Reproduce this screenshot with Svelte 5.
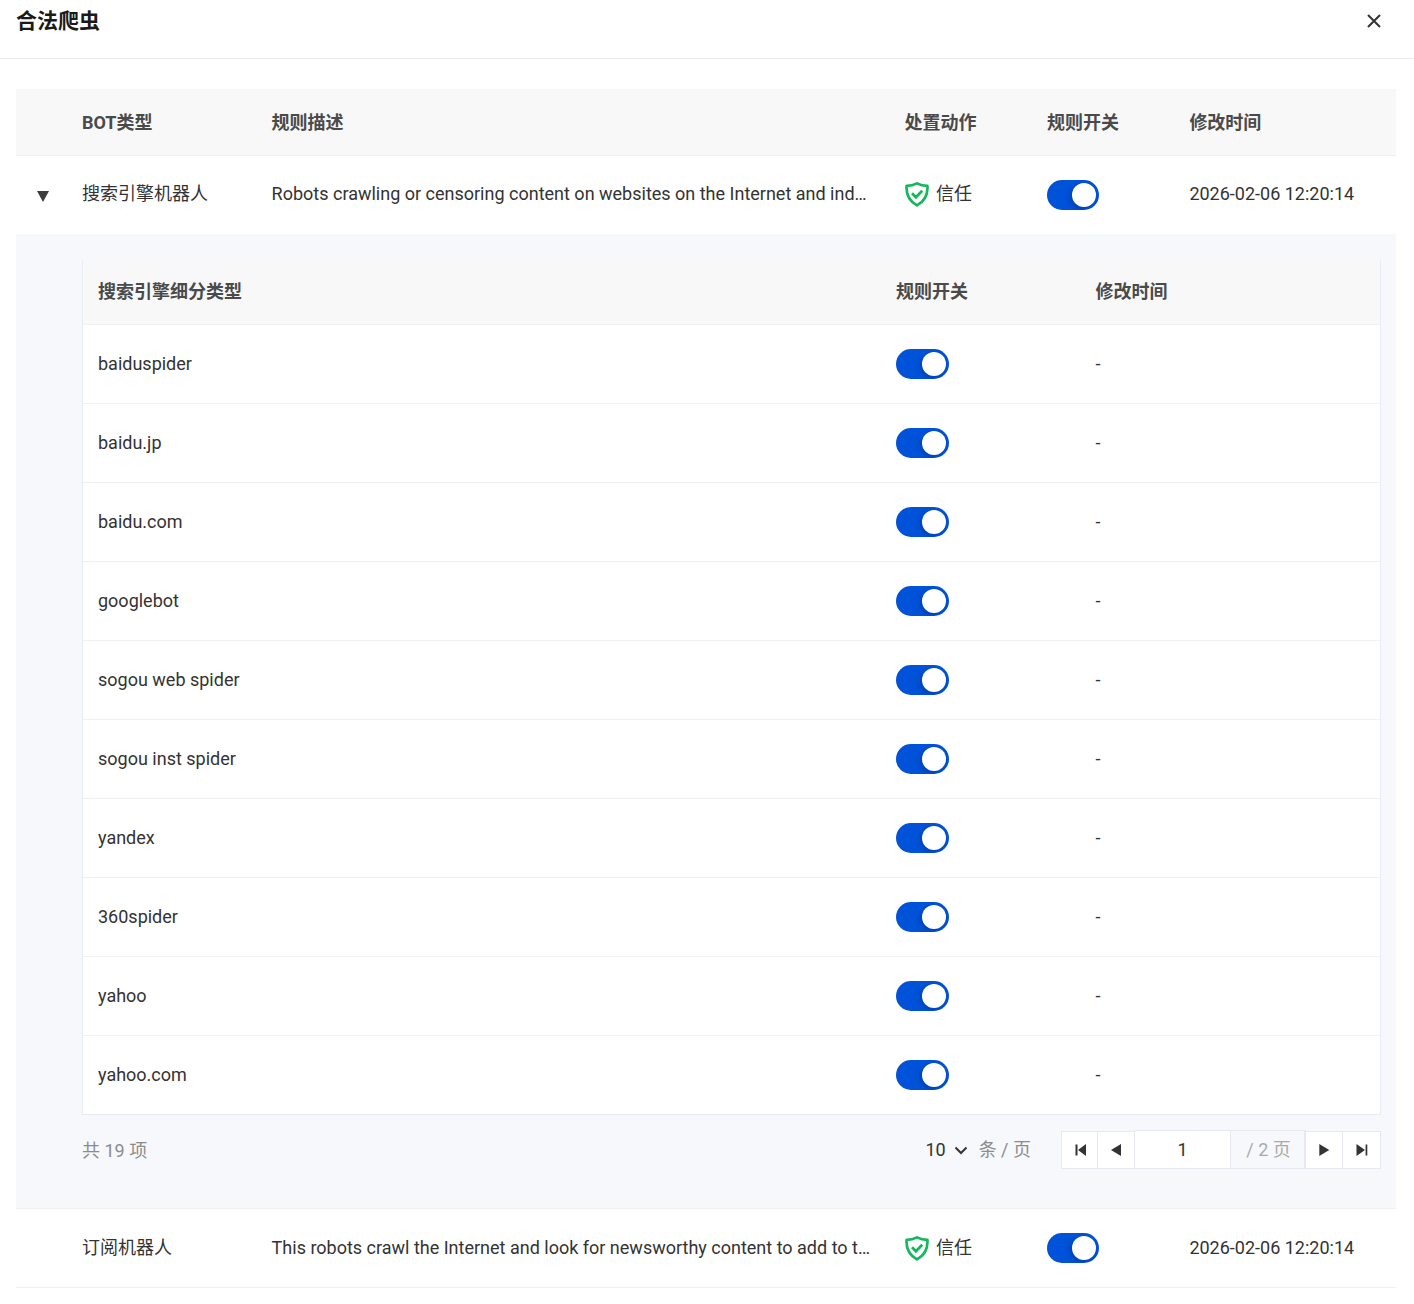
<script>
  const subTypes = [
    'baiduspider', 'baidu.jp', 'baidu.com', 'googlebot', 'sogou web spider',
    'sogou inst spider', 'yandex', '360spider', 'yahoo', 'yahoo.com'
  ];
</script>

{#snippet toggle()}
  <span class="switch"><span class="knob"></span></span>
{/snippet}

{#snippet trust()}
  <span class="action">
    <svg width="24" height="26" viewBox="0 0 24 26" fill="none" stroke="#12b85c">
      <path d="M12 2.400C15 4 18.400 4.900 22.400 4.900 23 12.800 19.800 20 12 24.400 4.200 20 1 12.800 1.600 4.900 5.600 4.900 9 4 12 2.400Z" stroke-width="2.700" stroke-linejoin="round" />
      <path d="M7 12.300 10.900 16.300 17.200 9.800" stroke-width="2.700" />
    </svg>
    信任
  </span>
{/snippet}

<div class="dialog">
  <header class="title">
    <h2>合法爬虫</h2>
    <svg class="close" width="16" height="16" viewBox="0 0 16 16" stroke="#333" stroke-width="2" fill="none">
      <path d="M2 2 14 14M14 2 2 14" />
    </svg>
  </header>

  <div class="body">
    <div class="row head">
      <span></span>
      <span>BOT类型</span>
      <span>规则描述</span>
      <span>处置动作</span>
      <span>规则开关</span>
      <span>修改时间</span>
    </div>

    <div class="row item open">
      <span class="caret"></span>
      <span>搜索引擎机器人</span>
      <span class="desc">Robots crawling or censoring content on websites on the Internet and indexing them for search engines</span>
      {@render trust()}
      {@render toggle()}
      <span>2026-02-06 12:20:14</span>
    </div>

    <div class="expanded">
      <div class="sub">
        <div class="subrow subhead">
          <span>搜索引擎细分类型</span>
          <span>规则开关</span>
          <span>修改时间</span>
        </div>
        {#each subTypes as name}
          <div class="subrow">
            <span>{name}</span>
            {@render toggle()}
            <span>-</span>
          </div>
        {/each}
      </div>

      <div class="pager">
        <span class="total">共 19 项</span>
        <span class="size">
          10
          <svg width="16" height="16" viewBox="0 0 16 16" fill="none" stroke="#333" stroke-width="2"><path d="M2.500 5.500 8 11 13.500 5.500" /></svg>
        </span>
        <span class="per">条 / 页</span>
        <div class="pages">
          <span class="btn first">
            <svg width="16" height="16" viewBox="0 0 16 16" fill="#333"><path d="M3.500 2.500h2v11h-2zM14 2v12L6 8z" /></svg>
          </span>
          <span class="btn prev">
            <svg width="16" height="16" viewBox="0 0 16 16" fill="#333"><path d="M13 2v12L3 8z" /></svg>
          </span>
          <span class="current">1</span>
          <span class="count">/ 2 页</span>
          <span class="btn next">
            <svg width="16" height="16" viewBox="0 0 16 16" fill="#333"><path d="M3.300 2v12l10-6z" /></svg>
          </span>
          <span class="btn last">
            <svg width="16" height="16" viewBox="0 0 16 16" fill="#333"><path d="M11.600 2.500h1.700v11h-1.700zM2.500 2v12l8.500-6z" /></svg>
          </span>
        </div>
      </div>
    </div>

    <div class="row item">
      <span></span>
      <span>订阅机器人</span>
      <span class="desc">This robots crawl the Internet and look for newsworthy content to add to their news feeds and aggregators</span>
      {@render trust()}
      {@render toggle()}
      <span>2026-02-06 12:20:14</span>
    </div>
  </div>
</div>

<style>
  :global(body) {
    margin: 0;
    background: #fff;
  }
  .dialog {
    font-family: Roboto, "Noto Sans CJK SC", sans-serif;
    font-size: 18px;
    line-height: 24px;
    color: #333;
    height: 1304px;
    overflow: hidden;
  }
  .title {
    display: flex;
    align-items: center;
    justify-content: space-between;
    height: 42px;
    padding: 0 32px 16px 16px;
    border-bottom: 1px solid #ebebeb;
  }
  h2 {
    margin: 0;
    font-size: 21px;
    font-weight: 700;
    line-height: 28px;
    color: #1a1a1a;
  }
  .body {
    padding: 30px 18px 0 16px;
  }
  .row {
    display: grid;
    grid-template-columns: 50px 189.600px 632.800px 142.600px 142.400px 1fr;
    align-items: center;
    border-bottom: 1px solid #f0f0f0;
    box-sizing: border-box;
  }
  .row > span {
    padding-left: 16px;
    min-width: 0;
  }
  .row > .switch {
    padding-left: 3px;
    margin-left: 16px;
  }
  .head {
    height: 67px;
    background: #f8f8f9;
    font-weight: 700;
    color: #4a4a4a;
  }
  .head > span {
    padding-top: 2px;
  }
  .item {
    height: 79px;
    background: #fff;
  }
  .item.open {
    height: 78px;
    border-bottom: 0;
  }
  .open > span:not(.switch, .caret) {
    padding-bottom: 2px;
  }
  .desc {
    overflow: hidden;
    white-space: nowrap;
    text-overflow: ellipsis;
    padding-right: 16px;
  }
  .caret {
    width: 0;
    height: 0;
    margin-left: 21px;
    padding: 0 !important;
    border-left: 6.500px solid transparent;
    border-right: 6.500px solid transparent;
    border-top: 11px solid #3d3d3d;
    margin-top: 3px;
  }
  .action {
    display: flex;
    align-items: center;
    gap: 6.500px;
  }
  .action svg {
    margin-left: 1px;
  }
  .switch {
    display: flex;
    justify-content: flex-end;
    align-items: center;
    width: 52.500px;
    height: 30px;
    box-sizing: border-box;
    padding: 3px;
    border-radius: 15px;
    background: #0052d9;
    overflow: hidden;
  }
  .knob {
    width: 24px;
    height: 24px;
    border-radius: 50%;
    background: #fff;
    box-shadow: -2px 2px 5px rgba(0, 25, 80, 0.3);
  }
  .expanded {
    height: 975px;
    box-sizing: border-box;
    padding: 26px 15px 0 66px;
    background: #f6f8fc;
    border-bottom: 1px solid #f0f0f0;
  }
  .sub {
    border-left: 1px solid #e9ecf4;
    border-right: 1px solid #e9ecf4;
    border-bottom: 1px solid #e9ecf4;
    background: #fff;
  }
  .subrow {
    display: grid;
    grid-template-columns: 798px 199.600px 1fr;
    align-items: center;
    height: 79px;
    box-sizing: border-box;
    padding-left: 15px;
    border-bottom: 1px solid #f0f0f0;
  }
  .subrow:last-child {
    border-bottom: 0;
    height: 78px;
  }
  .subhead {
    height: 65px;
    background: #f8f8f9;
    font-weight: 700;
    color: #4a4a4a;
  }
  .pager {
    display: flex;
    align-items: center;
    height: 38px;
    margin-top: 16px;
  }
  .total {
    margin-right: auto;
    color: #8c8c8c;
    position: relative;
    top: 1px;
  }
  .size {
    display: flex;
    align-items: center;
    gap: 7px;
  }
  .per {
    margin-left: 10px;
    margin-right: 30px;
    color: #8c8c8c;
  }
  .pages {
    display: flex;
    height: 38px;
  }
  .btn, .current, .count {
    display: flex;
    align-items: center;
    justify-content: center;
    box-sizing: border-box;
    height: 38px;
    background: #fff;
    border: 1px solid #e6e9f2;
    margin-left: -1px;
  }
  .btn {
    width: 38px;
  }
  .first {
    width: 37px;
    margin-left: 0;
  }
  .last {
    width: 39px;
  }
  .current, .count {
    height: 39px;
    margin-top: -1px;
  }
  .current {
    width: 97px;
  }
  .count {
    width: 76px;
    padding-left: 2px;
    background: #f6f8fc;
    color: #aaaaaa;
    border-width: 1px 2px 1px 1px;
  }
</style>
